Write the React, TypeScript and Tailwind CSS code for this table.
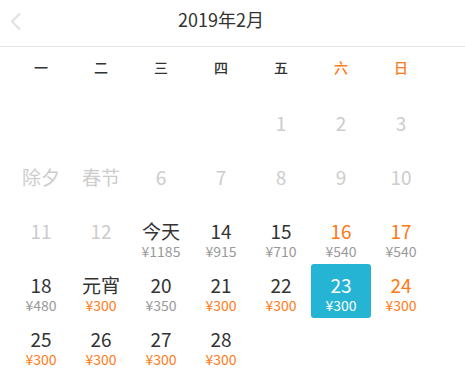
import { clsx } from "clsx";

type Cell = {
  label?: string;
  price?: string;
  tone?: "off" | "normal" | "weekend";
  priceTone?: "gray" | "orange";
  selected?: boolean;
};

const weekdays = ["一", "二", "三", "四", "五", "六", "日"];

// 2019年2月，从周五开始
const cells: Cell[] = [
  {}, {}, {}, {},
  { label: "1", tone: "off" },
  { label: "2", tone: "off" },
  { label: "3", tone: "off" },
  { label: "除夕", tone: "off" },
  { label: "春节", tone: "off" },
  { label: "6", tone: "off" },
  { label: "7", tone: "off" },
  { label: "8", tone: "off" },
  { label: "9", tone: "off" },
  { label: "10", tone: "off" },
  { label: "11", tone: "off" },
  { label: "12", tone: "off" },
  { label: "今天", price: "¥1185", priceTone: "gray" },
  { label: "14", price: "¥915", priceTone: "gray" },
  { label: "15", price: "¥710", priceTone: "gray" },
  { label: "16", price: "¥540", tone: "weekend", priceTone: "gray" },
  { label: "17", price: "¥540", tone: "weekend", priceTone: "gray" },
  { label: "18", price: "¥480", priceTone: "gray" },
  { label: "元宵", price: "¥300", priceTone: "orange" },
  { label: "20", price: "¥350", priceTone: "gray" },
  { label: "21", price: "¥300", priceTone: "orange" },
  { label: "22", price: "¥300", priceTone: "orange" },
  { label: "23", price: "¥300", selected: true },
  { label: "24", price: "¥300", tone: "weekend", priceTone: "orange" },
  { label: "25", price: "¥300", priceTone: "orange" },
  { label: "26", price: "¥300", priceTone: "orange" },
  { label: "27", price: "¥300", priceTone: "orange" },
  { label: "28", price: "¥300", priceTone: "orange" },
];

function DayCell({ cell }: { cell: Cell }) {
  if (!cell.label) return <div className="h-[54px]" />;
  return (
    <div
      className={clsx(
        "flex h-[54px] flex-col items-center pt-[10px] rounded-[3px]",
        cell.selected && "bg-[#26b4d4]"
      )}
    >
      <span
        className={clsx(
          "text-[19px] leading-[22px]",
          cell.selected
            ? "text-white"
            : cell.tone === "off"
              ? "text-[#cccccc]"
              : cell.tone === "weekend"
                ? "text-[#ff7a14]"
                : "text-[#333333]"
        )}
      >
        {cell.label}
      </span>
      {cell.price && (
        <span
          className={clsx(
            "text-[14px] leading-[18px]",
            cell.selected
              ? "text-white"
              : cell.priceTone === "orange"
                ? "text-[#ff7a14]"
                : "text-[#999999]"
          )}
        >
          {cell.price}
        </span>
      )}
    </div>
  );
}

export default function App() {
  return (
    <div className="h-[390px] w-[465px] bg-white font-['Noto_Sans_CJK_SC','Noto_Sans',sans-serif]">
      <header className="relative flex h-[47px] items-center border-b border-[#e5e5e5]">
        <svg
          className="absolute left-[9px] top-[12px]"
          width="14"
          height="19"
          viewBox="0 0 14 19"
          fill="none"
        >
          <path d="M11 1.5 3 9.5l8 8" stroke="#e0e0e0" strokeWidth="2" />
        </svg>
        <div className="w-[442px] pb-[8px] text-center text-[18px] text-[#333333]">
          2019年2月
        </div>
      </header>
      <div className="grid grid-cols-[repeat(7,60px)] px-[11px]">
        {weekdays.map((w, i) => (
          <div
            key={w}
            className={clsx(
              "flex h-[40px] items-center justify-center text-[14px] font-medium",
              i >= 5 ? "text-[#ff7a14]" : "text-[#333333]"
            )}
          >
            {w}
          </div>
        ))}
      </div>
      <div className="mt-[15px] grid grid-cols-[repeat(7,60px)] px-[11px]">
        {cells.map((c, i) => (
          <DayCell key={i} cell={c} />
        ))}
      </div>
    </div>
  );
}
